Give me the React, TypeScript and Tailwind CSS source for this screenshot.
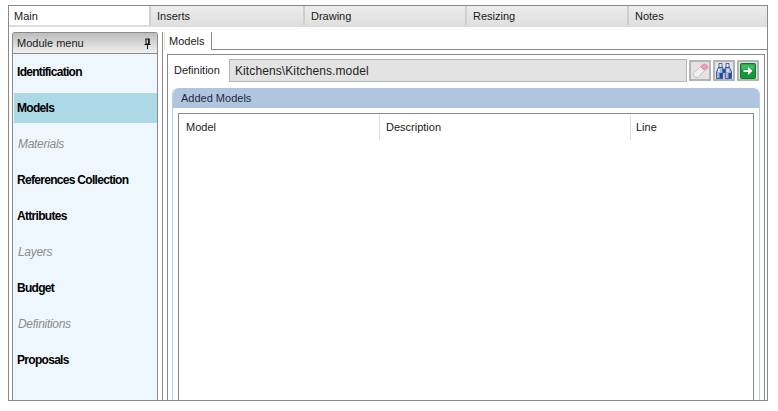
import React from 'react';

const tabs = [
  { label: 'Main', width: 'w-[140px]', active: true },
  { label: 'Inserts', width: 'w-[154px]', active: false },
  { label: 'Drawing', width: 'w-[162px]', active: false },
  { label: 'Resizing', width: 'w-[162px]', active: false },
  { label: 'Notes', width: 'flex-1', active: false },
];

const menu = [
  { label: 'Identification' },
  { label: 'Models', selected: true },
  { label: 'Materials', disabled: true },
  { label: 'References Collection' },
  { label: 'Attributes' },
  { label: 'Layers', disabled: true },
  { label: 'Budget' },
  { label: 'Definitions', disabled: true },
  { label: 'Proposals' },
];

const PinIcon = () => (
  <svg width="9" height="11" viewBox="0 0 9 11">
    <path d="M2.500 1h4M3 1v5h3V1M1.500 6.500h6M4.500 7v4" fill="none" stroke="#111" strokeWidth="1" />
    <rect x="5" y="1" width="1.500" height="5" fill="#111" />
  </svg>
);

const EraserIcon = () => (
  <svg width="17" height="16" viewBox="0 0 17 16" className="shrink-0">
    <path d="M1 10.500 L8.500 3.500 L12.500 7.500 L6 14.500 L3 14.500 Z" fill="#f2f0ee" stroke="#bdbab7" strokeWidth="0.8" />
    <path d="M8.500 3.500 L11 1.300 Q12.500 0.300 14 1.300 L15.800 3 Q16.500 4.500 15.300 5.500 L12.500 7.500 Z" fill="#f09ab3" stroke="#dc8ca4" strokeWidth="0.6" />
  </svg>
);

const BinocularsIcon = () => (
  <svg width="16" height="16" viewBox="0 0 16 16" className="shrink-0">
    <path d="M3 0.500h3v4H3zM10 0.500h3v4h-3z" fill="#e6edf9" stroke="#2a4a94" strokeWidth="0.8" />
    <path d="M2.500 4.500h4.300v11H0.500V9z" fill="#9fb6e4" stroke="#223f8a" strokeWidth="0.8" />
    <path d="M13.500 4.500H9.200v11h6.300V9z" fill="#9fb6e4" stroke="#223f8a" strokeWidth="0.8" />
    <path d="M6.800 6h2.400v4H6.800z" fill="#2a4a94" />
    <path d="M3.500 10h3v5h-3zM12.500 10h2.500v5h-2.500z" fill="#28478f" />
    <path d="M3 6v3M12 6v3" stroke="#ffffff" strokeWidth="1.200" />
  </svg>
);

const ArrowIcon = () => (
  <svg width="16" height="16" viewBox="0 0 16 16" className="shrink-0">
    <rect x="0.500" y="0.500" width="15" height="15" rx="1" fill="#149a3a" stroke="#0c7a2b" />
    <rect x="1.500" y="1.500" width="13" height="5" fill="#43b862" />
    <path d="M3.500 7h4.500V4l4.500 4-4.500 4V9H3.500z" fill="#fff" />
  </svg>
);

const IconButton = ({ children }: { children: React.ReactNode }) => (
  <div className="w-[22px] h-[21px] flex items-center justify-center bg-[#e3e3e3] border-2 border-[#b4b4b4] overflow-hidden">
    {children}
  </div>
);

export default function App() {
  return (
    <div className="h-[411px] bg-white pl-2 pr-[10px] pt-[5px] pb-[10px] font-['Liberation_Sans',sans-serif] text-[11px] text-[#1a1a1a] overflow-hidden">
      <div className="h-full flex flex-col border border-[#8a8a8a] bg-white">
        <div className="h-[21px] flex border-b-2 border-[#dcdcdc] bg-gradient-to-b from-[#ececec] to-[#e0e0e0] shrink-0">
          {tabs.map((tab) => (
            <div
              key={tab.label}
              className={`${tab.width} ${tab.active ? 'bg-white pl-[5px]' : 'pl-[6px] border-l-2 border-[#cfcfcf]'} flex items-center pt-[2px]`}
            >
              {tab.label}
            </div>
          ))}
        </div>

        <div className="flex-1 flex min-h-0 pl-[3px] pt-[5px]">
          <div className="w-[146px] flex flex-col border border-b-0 border-[#8a8a8a] rounded-t-[3px] bg-[#eef6fe] shrink-0">
            <div className="h-[21px] flex items-center justify-between pl-1 pr-[5px] border-b border-[#8a8a8a] bg-gradient-to-b from-[#bdbdbd] to-[#f0f0f0] shrink-0">
              <span>Module menu</span>
              <PinIcon />
            </div>
            <div className="pl-px">
              {menu.map((item) => (
                <div key={item.label} className="h-9 flex items-center">
                  <div
                    className={`w-full h-[30px] flex items-center text-xs ${item.selected ? 'bg-[#add8e6]' : ''} ${
                      item.disabled
                        ? 'italic text-[#8c8c8c] font-normal tracking-[-0.3px] pl-[4px]'
                        : 'font-bold text-black tracking-[-0.7px] pl-[3px]'
                    }`}
                  >
                    {item.label}
                  </div>
                </div>
              ))}
            </div>
          </div>

          <div className="flex-1 min-w-0 flex flex-col ml-1 border-l border-[#8a8a8a] pl-px">
            <div className="h-[18px] flex shrink-0 border-l border-[#e6e6e6]">
              <div className="w-[47px] h-[18px] bg-white border-r border-[#8a8a8a] pl-[4px] flex items-center">Models</div>
              <div className="flex-1 border-b border-[#8a8a8a]" />
            </div>
            <div className="flex-1 min-h-0 flex flex-col mt-[4px] ml-[3px] mr-[2px] border border-b-0 border-[#8a8a8a] px-1 pt-[4px]">
              <div className="h-[23px] flex items-center shrink-0">
                <span className="w-[57px] pl-[2px] shrink-0">Definition</span>
                <div className="flex-1 h-[23px] flex items-center bg-[#e3e3e3] border border-[#b4b4b4] pl-[5px] text-xs tracking-[0.1px] text-[#222]">
                  Kitchens\Kitchens.model
                </div>
                <div className="flex items-center gap-[2px] ml-[2px] mr-[1px]">
                  <IconButton><EraserIcon /></IconButton>
                  <IconButton><BinocularsIcon /></IconButton>
                  <IconButton><ArrowIcon /></IconButton>
                </div>
              </div>
              <div className="flex-1 min-h-0 flex flex-col mt-[6px] border-x border-[#b7cfea] rounded-t-[6px]">
                <div className="h-[20px] flex items-center pl-2 bg-[#b0c6e0] rounded-t-[6px] shrink-0 text-[#1f2a3a]">
                  Added Models
                </div>
                <div className="flex-1 min-h-0 mt-[5px] mx-[5px] border border-b-0 border-[#8a8a8a] bg-white">
                  <div className="h-[26px] flex">
                    <div className="w-[201px] pl-[7px] flex items-center border-r border-[#e0e0e0]">Model</div>
                    <div className="w-[251px] pl-[6px] flex items-center border-r border-[#e0e0e0]">Description</div>
                    <div className="flex-1 pl-[5px] flex items-center">Line</div>
                  </div>
                </div>
              </div>
            </div>
          </div>
        </div>
      </div>
    </div>
  );
}
